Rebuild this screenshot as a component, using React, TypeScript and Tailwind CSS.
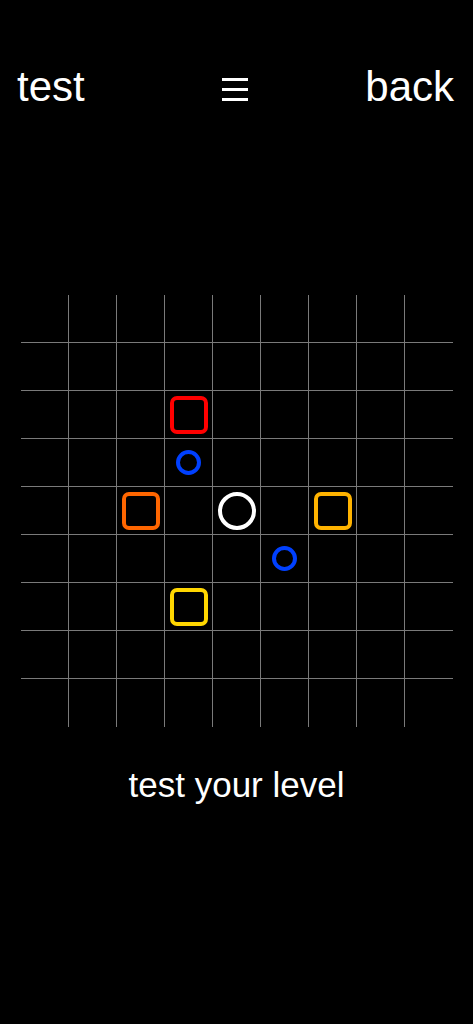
import React from "react"

type Piece = { kind: "square" | "ring" | "dot"; color: string }

// row-col keyed pieces on the 9x9 board
const pieces: Record<string, Piece> = {
  "2-3": { kind: "square", color: "border-[#ff0000]" },
  "3-3": { kind: "dot", color: "border-[#0040ff]" },
  "4-2": { kind: "square", color: "border-[#ff6600]" },
  "4-4": { kind: "ring", color: "border-white" },
  "4-6": { kind: "square", color: "border-[#ffb300]" },
  "5-5": { kind: "dot", color: "border-[#0040ff]" },
  "6-3": { kind: "square", color: "border-[#ffd600]" },
}

function Cell({ row, col }: { row: number; col: number }) {
  const p = pieces[`${row}-${col}`]
  const right = col < 8 ? "border-r" : ""
  const bottom = row < 8 ? "border-b" : ""
  return (
    <div className={`w-[48px] h-[48px] flex items-center justify-center border-[#7a7a7a] ${right} ${bottom}`}>
      {p?.kind === "square" && <div className={`w-[38px] h-[38px] rounded-[7px] border-4 ${p.color}`} />}
      {p?.kind === "ring" && <div className={`w-[38px] h-[38px] rounded-full border-4 ${p.color}`} />}
      {p?.kind === "dot" && <div className={`w-[25px] h-[25px] rounded-full border-4 ${p.color}`} />}
    </div>
  )
}

export default function App() {
  const rows = Array.from({ length: 9 }, (_, i) => i)
  return (
    <div className="h-[1024px] bg-black text-white flex flex-col" style={{ fontFamily: '"Liberation Sans", Arial, sans-serif' }}>
      <header className="mt-[66px] h-[42px] pl-[17px] pr-[19px] grid grid-cols-3 items-center text-[42px] leading-[42px] font-light">
        <span>test</span>
        <div className="flex flex-col items-center gap-[7px] mt-[4px]">
          <span className="block w-[26px] h-[3px] bg-white" />
          <span className="block w-[26px] h-[3px] bg-white" />
          <span className="block w-[26px] h-[3px] bg-white" />
        </div>
        <span className="text-right">back</span>
      </header>

      <div className="mt-[187px] ml-[21px] w-[432px] grid grid-cols-9">
        {rows.map((r) => rows.map((c) => <Cell key={`${r}-${c}`} row={r} col={c} />))}
      </div>

      <p className="mt-[40px] text-center text-[35px] leading-[35px] font-light">test your level</p>
    </div>
  )
}
